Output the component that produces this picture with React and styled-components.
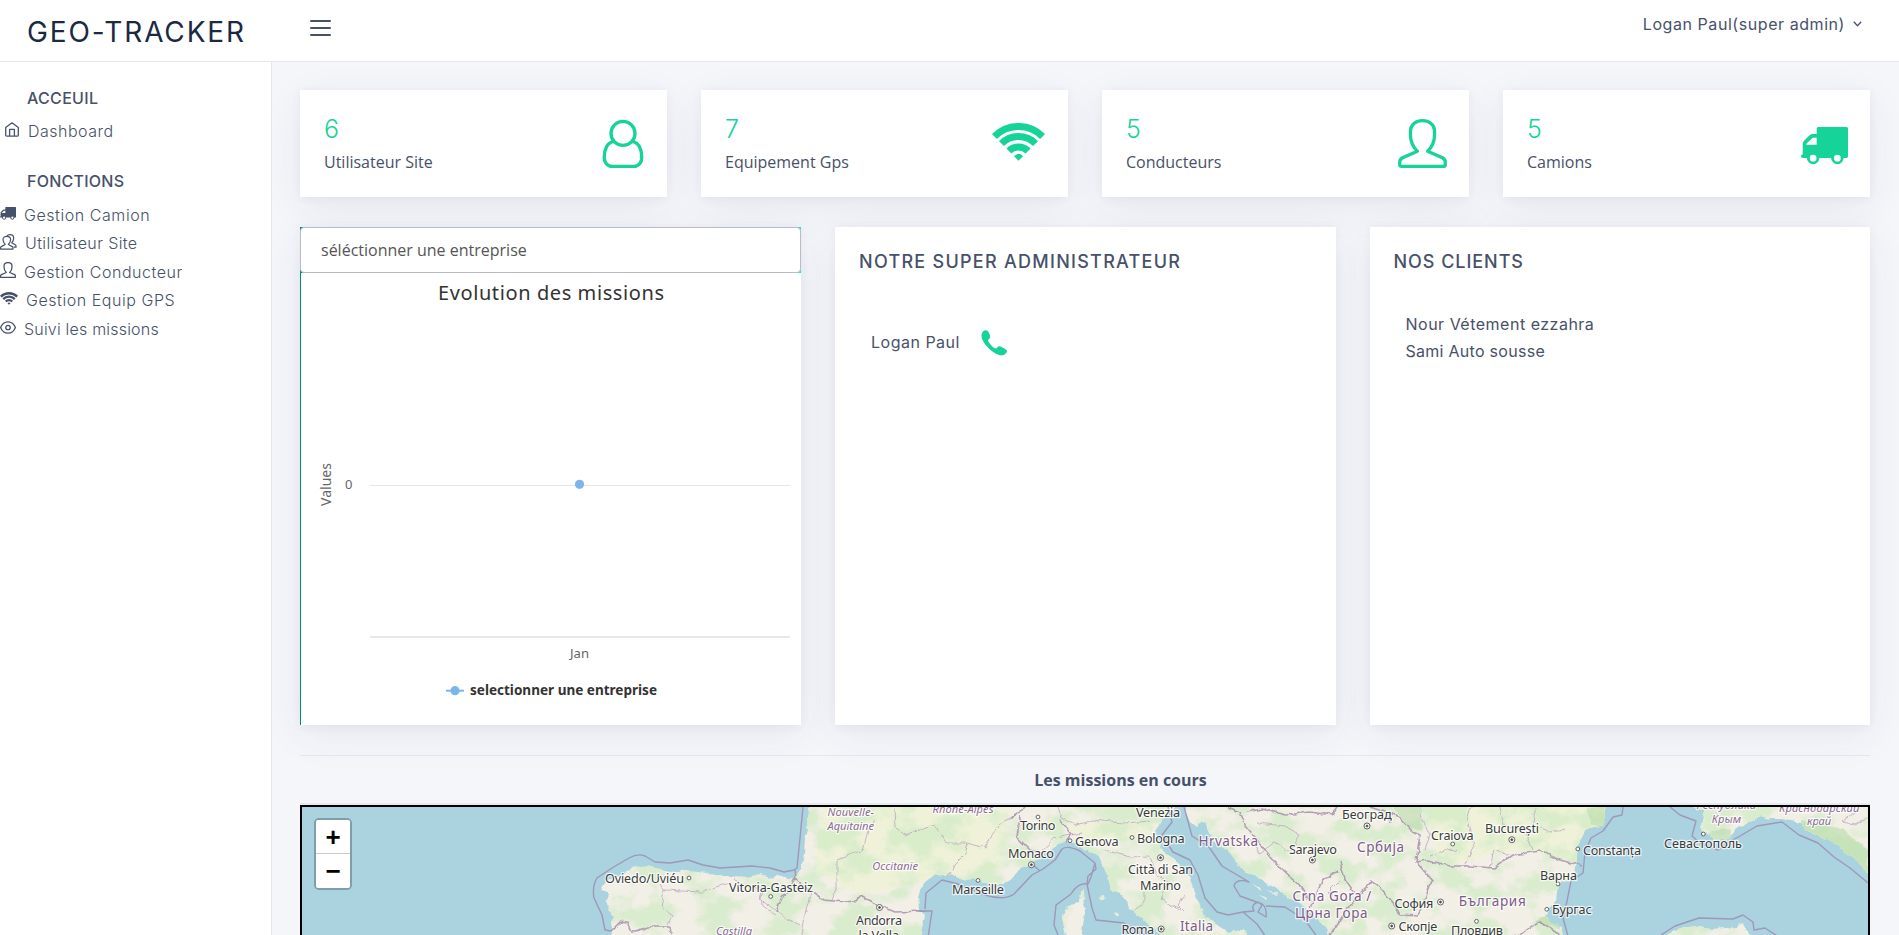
import React from "react";
import styled, { createGlobalStyle } from "styled-components";

const GlobalStyle = createGlobalStyle`
  * { box-sizing: border-box; }
  body {
    margin: 0;
    background: #f5f6fa;
    color: #475169;
    font-family: "Open Sans", "Noto Sans", sans-serif;
    font-size: 16px;
    overflow: hidden;
  }
  h1, h2, h3, p, ul { margin: 0; padding: 0; font-weight: normal; list-style: none; }
`;

const display = `"Inter", "Noto Sans", sans-serif`;
const green = "#16d39a";

const Page = styled.div`
  display: flex;
  flex-direction: column;
  height: 935px;
  overflow: hidden;
`;
const Header = styled.header`
  display: flex;
  align-items: flex-start;
  flex: none;
  height: 62px;
  padding-left: 27px;
  background: #fff;
  border-bottom: 1px solid #e4e7ed;
`;
const Brand = styled.h1`
  width: 283px;
  padding-top: 12px;
  font: 400 28px/41px ${display};
  letter-spacing: 1.85px;
  color: #1b2942;
  white-space: nowrap;
`;
const MenuButton = styled.button`
  display: flex;
  flex-direction: column;
  gap: 5px;
  width: 21px;
  margin-top: 20px;
  padding: 0;
  border: 0;
  background: none;
  span { height: 2px; border-radius: 1px; background: #475169; }
`;
const Account = styled.div`
  display: flex;
  align-items: center;
  gap: 8px;
  margin: 12px 37px 0 auto;
  font: 400 16px/24px ${display};
  letter-spacing: ${(p) => p.$track}px;
`;
const Body = styled.div`
  display: flex;
  flex: 1;
  min-height: 0;
`;
const Sidebar = styled.nav`
  flex: none;
  width: 272px;
  background: #fff;
  border-right: 1px solid #e4e7ed;
  padding-top: 24px;
`;
const NavTitle = styled.h2`
  padding-left: 27px;
  font: 500 16px/24px ${display};
  letter-spacing: ${(p) => p.$track}px;
`;
const NavList = styled.ul`
  padding: ${(p) => p.$pad};
`;
const NavItem = styled.li`
  display: flex;
  align-items: center;
  height: 28.5px;
  padding-left: ${(p) => p.$indent || 0}px;
  font: 300 16px/24px ${display};
  letter-spacing: ${(p) => p.$track}px;
  white-space: nowrap;
`;
const NavIcon = styled.span`
  display: flex;
  flex: none;
  width: ${(p) => p.$slot}px;
  padding-bottom: 3px;
`;
const Main = styled.main`
  flex: 1;
  min-width: 0;
  padding: 28px 29px 0 28px;
`;
const Row = styled.div`
  display: grid;
  grid-template-columns: repeat(${(p) => p.$cols}, 1fr);
  gap: 34px;
  margin-bottom: 30px;
`;
const Card = styled.section`
  background: #fff;
  box-shadow: 0 10px 40px rgba(62, 57, 107, 0.07), 0 2px 9px rgba(62, 57, 107, 0.06);
`;
const StatCard = styled(Card)`
  display: flex;
  justify-content: space-between;
  height: 107px;
  padding: 24px 22px 0 24px;
`;
const StatValue = styled.p`
  font: 300 25px/30px ${display};
  color: ${green};
`;
const StatLabel = styled.p`
  padding-top: 5px;
  line-height: 26px;
`;
const StatIcon = styled.div`
  display: flex;
  align-items: flex-start;
  padding: ${(p) => p.$pad};
  color: ${green};
`;
const Panel = styled(Card)`
  height: 498px;
`;
const InfoPanel = styled(Panel)`
  padding: 22px 24px;
`;
const PanelTitle = styled.h2`
  font: 500 18px/26px ${display};
  letter-spacing: ${(p) => p.$track}px;
`;
const Contact = styled.div`
  display: flex;
  align-items: center;
  gap: 21px;
  padding: 54px 0 0 12px;
  font: 400 16px/27px ${display};
  letter-spacing: ${(p) => p.$track}px;
  color: #475169;
`;
const Clients = styled.ul`
  padding: 36px 0 0 12px;
  font: 400 16px/27px ${display};
`;
const Client = styled.li`
  letter-spacing: ${(p) => p.$track}px;
`;
const SelectFrame = styled.div`
  height: 46px;
  background: linear-gradient(90deg, #008b8b, #22dfe4);
`;
const Select = styled.div`
  height: 46px;
  padding-left: 20px;
  border: 1px solid #b8bcc6;
  border-radius: 4px;
  background: #fff;
  color: #555;
  line-height: 44px;
`;
const ChartArea = styled.div`
  height: 452px;
  border-left: 1px solid #008b8b;
  svg { display: block; }
`;
const Missions = styled.h3`
  height: 50px;
  border-top: 1px solid #e1e8ee;
  border-bottom: 2px solid #e6eaef;
  padding: 12px 0 0 71px;
  text-align: center;
  font-size: 16px;
  font-weight: 700;
  line-height: 24px;
`;
const MapFrame = styled.div`
  position: relative;
  width: 1570px;
  height: 132px;
  border: 2px solid #000;
  border-bottom: 0;
  background: #aad3df;
  svg { display: block; }
`;
const ZoomControl = styled.div`
  position: absolute;
  left: 12px;
  top: 11px;
  border: 2px solid rgba(0, 0, 0, 0.25);
  border-radius: 5px;
  background-clip: padding-box;
`;
const ZoomButton = styled.button`
  display: block;
  width: 34px;
  height: 34px;
  padding: 0;
  border: 0;
  border-bottom: ${(p) => (p.$divided ? "1px solid #ccc" : "0")};
  border-radius: ${(p) => (p.$divided ? "2px 2px 0 0" : "0 0 2px 2px")};
  background: #fff;
  color: #000;
  font: 700 26px/34px "Liberation Sans", sans-serif;
`;

const UserRound = ({ w = 42, h = 50 }) => (
  <svg width={w} height={h} viewBox="0 0 42 50" fill="none" stroke="currentColor" strokeWidth="3.3">
    <circle cx="21" cy="14.4" r="12" />
    <path d="M12 22.6C5 23 2.2 31 2.2 38.5c0 5 3.3 8.8 8 8.8h21.6c4.700 0 8-3.800 8-8.800C39.800 31 37 23 30 22.600" />
  </svg>
);
const UserLine = ({ size = 49, stroke = 3.2 }) => (
  <svg width={size} height={size} viewBox="0 0 48 48" fill="none" stroke="currentColor" strokeWidth={stroke} strokeLinejoin="round">
    <path d="M19 31.500C14 27 12.200 21 12.200 15.500V11.500C12.200 5.500 17.500 1.700 24 1.700S35.800 5.500 35.800 11.500V15.500C35.800 21 34 27 29 31.500L43.500 38Q46.300 39.500 46.300 42V45Q46.300 46.300 45 46.300H3Q1.700 46.300 1.700 45V42Q1.700 39.500 4.500 38Z" />
  </svg>
);
const UsersLine = () => (
  <svg width="17" height="16" viewBox="0 0 17 16" fill="none" stroke="currentColor" strokeWidth="1.2" strokeLinejoin="round">
    <path d="M5.200 10.500C3.600 9 3 7.300 3 5.600C3 3.400 4.700 2.300 6.800 2.300s3.800 1.100 3.800 3.300c0 1.700-.6 3.400-2.200 4.900L12.300 12.600q.7.400.7 1.200v1.300H.6V13.800q0-.8.7-1.200Z" />
    <path d="M7 2C7.600 1 8.700.6 10 .6c2.100 0 3.700 1.100 3.700 3.300 0 1.700-.6 3.400-2 4.900l3.500 2q.8.500.8 1.200v1.200h-2.200" />
  </svg>
);
const Wifi = ({ w = 53, h = 38 }) => (
  <svg width={w} height={h} viewBox="0 0 53 38" fill="none" stroke="currentColor" strokeWidth="7">
    <path d="M2.400 13.500A34 34 0 0 1 50.600 13.500M9.500 20.600A24 24 0 0 1 43.500 20.600M16.900 27.900A13.600 13.600 0 0 1 36.100 27.900" />
    <path d="M26.500 37.700L22 33.200Q26.500 28.500 31 33.200Z" fill="currentColor" stroke="none" />
  </svg>
);
const Truck = ({ w = 47, h = 38 }) => (
  <svg width={w} height={h} viewBox="0 0 46.500 37.500" fill="currentColor" fillRule="evenodd">
    <path d="M17 0H45Q46.500 0 46.500 1.500V29Q46.500 30.500 45 30.500H42.200A6.200 6.200 0 0 1 29.800 30.500H18.200A6.200 6.200 0 0 1 5.800 30.500H2Q0 30.500 0 29Q0 27.500 1.700 27V17Q1.700 15 3 13.500L8 8.500Q9.500 7 11 7H15.500V1.500Q15.500 0 17 0ZM15.500 10.500H11.500L5.300 16.500V17.500H15.500ZM8.700 30.800a3.300 3.300 0 1 0 6.600 0a3.300 3.300 0 1 0-6.600 0M32.700 30.800a3.300 3.300 0 1 0 6.600 0a3.300 3.300 0 1 0-6.600 0" />
  </svg>
);
const Home = () => (
  <svg width="14" height="15" viewBox="0 0 14 15" fill="none" stroke="currentColor" strokeWidth="1.300" strokeLinejoin="round">
    <path d="M.7 5.500L7 .8L13.300 5.500V13q0 1.200-1.200 1.200H1.900Q.7 14.200.7 13Z" />
    <path d="M4.600 14V7.300H9.400V14" />
  </svg>
);
const Eye = () => (
  <svg width="16" height="13" viewBox="0 0 16 13" fill="none" stroke="currentColor" strokeWidth="1.300">
    <path d="M.6 6.500C3.500-1.100 12.500-1.100 15.400 6.500C12.500 14.100 3.500 14.100.6 6.500Z" />
    <circle cx="8" cy="6.500" r="2.200" />
  </svg>
);
const Phone = () => (
  <svg width="26" height="26" viewBox="0 0 26 26" fill={green}>
    <path d="M3.500.5C5.500-.3 7 .5 8 3C9 5.500 10 7.500 8 9C6.500 10.200 7 11 8 12.500C9.500 15 12 17.500 14 18.300C15.500 19 16 17.800 17 16.800C18.500 15.500 21 17 23.500 18.500C26 20 26.500 21 25.500 22.500C23 26.500 18 26 13 22.500C7 18.500 2 12.500.7 7.500C0 4.500 1 1.500 3.500.5Z" />
  </svg>
);
const Chevron = () => (
  <svg width="9" height="6" viewBox="0 0 9 6" fill="none" stroke="currentColor" strokeWidth="1.300">
    <path d="M.8.8L4.500 4.700L8.200.8" />
  </svg>
);

const stats = [
  { value: 6, label: "Utilisateur Site", pad: "5px 1px 0 0", icon: <UserRound /> },
  { value: 7, label: "Equipement Gps", pad: "9px 1px 0 0", icon: <Wifi /> },
  { value: 5, label: "Conducteurs", pad: "5px 0 0", icon: <UserLine /> },
  { value: 5, label: "Camions", pad: "13px 0 0", icon: <Truck /> },
];

const links = [
  { label: "Gestion Camion", track: 0.56, slot: 24, icon: <Truck w={16} h={13} /> },
  { label: "Utilisateur Site", track: 0.4, slot: 25, icon: <UsersLine /> },
  { label: "Gestion Conducteur", track: 0.55, slot: 24, icon: <UserLine size={16} stroke={3.8} /> },
  { label: "Gestion Equip GPS", track: 0.55, slot: 26, icon: <Wifi w={18} h={13} /> },
  { label: "Suivi les missions", track: 0.2, slot: 24, icon: <Eye /> },
];

function MissionChart() {
  return (
    <svg width="500" height="452" viewBox="301 273 500 452" fontFamily="Noto Sans, sans-serif" fill="#666">
      <text x="438" y="300" fontSize="20" fill="#333" textLength="226">Evolution des missions</text>
      <path d="M370 485.500H790" stroke="#e6e6e6" />
      <path d="M370 637H790" stroke="#e6e9f5" strokeWidth="2" />
      <circle cx="579.500" cy="484.300" r="4.600" fill="#7cb5ec" />
      <text transform="translate(331 506) rotate(-90)" fontSize="14.500" textLength="43" lengthAdjust="spacingAndGlyphs">Values</text>
      <text x="345" y="489" fontSize="13">0</text>
      <text x="570" y="658" fontSize="12.500" textLength="19" lengthAdjust="spacingAndGlyphs">Jan</text>
      <path d="M446 690.700H464" stroke="#7cb5ec" strokeWidth="2" />
      <circle cx="455" cy="690.700" r="4.600" fill="#7cb5ec" />
      <text x="470" y="695" fontSize="14.500" fontWeight="700" fill="#333" textLength="187" lengthAdjust="spacingAndGlyphs">selectionner une entreprise</text>
    </svg>
  );
}

const land = [
  "M810 800L809 812L807 822L808 830L805 838L804 855L800 870L794 878L785 878L778 876L772 878L760 874L747 877L734 876L722 876L710 874L698 871L686 870L670 872L655 869L648 865L641 867L634 866L629 872L618 877L605 883L601 890L607 893L608 898L605 902L610 906L608 911L614 916L611 922L612 930L611 945H918L925 915L919 910L918 897L924 883L937 873L944 877L951 874L960 880L972 878L980 882L990 884L1003 884L1013 877L1019 870L1027 865L1041 858L1048 852L1055 847L1060 843L1066 841L1075 843L1082 849L1089 850L1099 857L1106 870L1108 880L1112 890L1120 893L1126 900L1128 909L1134 912L1144 920L1152 928L1172 945H1250L1246 930L1237 930L1230 933L1220 927L1206 917L1200 906L1196 897L1193 887L1189 877L1180 866L1172 857L1164 852L1160 847L1156 833L1161 820L1170 812L1183 800Z",
  "M1185 800L1187 815L1190 822L1196 827L1201 821L1206 823L1208 831L1213 841L1221 846L1230 853L1238 864L1247 873L1257 877L1272 887L1283 893L1292 900L1303 906L1310 914L1322 923L1332 940H1563L1562 926L1552 923L1545 914L1550 907L1556 902L1557 893L1558 884L1571 880L1575 872L1577 863L1577 847L1582 838L1586 830L1590 828L1604 825L1605 800Z",
  "M1693 807L1703 812L1704 820L1700 827L1704 832L1713 837L1715 841L1727 839L1732 836L1735 830L1743 826L1753 820L1761 816L1770 819L1782 819L1800 823L1810 833L1823 839L1836 843L1845 852L1853 857L1862 868L1870 875V800H1690Z",
  "M1661 940L1668 934L1678 928L1690 928L1700 926L1712 929L1728 928L1736 927L1743 923L1748 932L1752 940Z",
  "M1080 892L1084 890L1085 913L1083 925L1081 940H1067L1064 927L1062 917L1067 907L1074 904L1079 903Z",
  "M1098 898l5-2 3 2-3 3zM1115 913l3-1 1 3-3 1zM1218 825l4 10-2 2zM1226 840l7 6-2 2zM1252 884l10 4-1 2zM1266 890l12 3-1 2zM1258 895l9 3-1 2z",
];
const seaLines =
  "M803 807L800 838L797 868L794 870L784 872L770 868L752 866L736 867L720 868L703 865L688 860L670 863L655 862L645 856Q638 853 629 858L612 868L597 878Q592 886 594 898L602 915L605 930L611 931M928 938L932 911H916M925 909L926 893L942 880L958 884L985 895Q1004 901 1014 894L1032 875L1043 869L1055 860L1062 849Q1068 845 1080 851L1095 863L1091 877L1088 884Q1078 882 1071 894L1056 905L1054 925L1060 940M1095 863L1096 869L1088 876L1087 884L1092 908L1096 920L1124 923L1140 933L1150 936M1032 864L1040 871M1168 807L1172 822L1162 835L1173 852L1190 860L1198 875L1205 898L1217 912L1228 915L1243 912L1254 911Q1250 905 1258 902L1262 905L1258 912L1266 917Q1267 907 1262 904L1240 896L1234 886Q1236 878 1249 882L1222 866L1209 847L1192 836L1184 807M1243 912L1257 924L1266 937M1266 906L1285 907L1305 920L1318 938M1623 807L1622 815L1613 817L1603 831L1591 838L1585 852L1583 873L1571 881L1567 901L1563 918L1569 940M1670 807L1680 815L1696 821L1692 836L1700 843L1718 850L1731 841L1740 836L1757 826L1782 822L1799 835L1818 843L1834 857L1850 868L1868 883M1661 935L1675 926L1699 918L1733 919L1743 915L1753 922L1754 930L1765 928L1777 936";
const borders =
  "M794 870L795 879L811 891L824 900L843 902L856 901L860 896L878 905L895 912L925 911M795 879L790 888L782 898L776 912M611 931L620 922L628 923L632 932L648 927L670 927L672 940M1060 820L1072 834L1066 842M1010 818L1020 812L1025 807M1020 816L1017 837L1030 850L1042 853M1228 807L1240 812L1246 826L1262 846L1280 868L1302 888L1310 901M1246 812L1262 809L1285 815L1310 812L1332 815L1338 807M1338 870L1322 881L1316 895L1310 908M1330 935L1350 905L1372 882L1380 887L1395 905L1400 915L1418 916L1432 880L1416 862L1420 835L1413 832L1400 818L1390 812M1416 862L1428 860L1450 866L1470 866L1494 868L1512 855L1540 851L1560 860L1582 866M1560 935L1540 922L1520 934L1500 940M1370 807L1385 812L1391 822M1340 862L1345 880L1354 893";
const provinces =
  "M661 885L664 890L661 907L672 915L667 925M664 890L700 892L730 883M734 876L740 885L765 888L760 899L778 912L790 920L800 925M760 890L762 905L775 915M811 891L806 910L802 935M874 820L868 830L863 850L836 860L836 890L832 900M895 807L896 828L905 835L920 830L935 825L945 843L968 843L965 854L954 865L948 876M968 843L985 848L993 835L1000 824L1016 815M1058 807L1062 818L1076 825L1094 820L1110 822L1125 823L1150 821M1042 850L1055 838L1082 833M1105 850L1130 857L1150 856M1150 858L1156 875L1168 882L1160 899L1180 910M1135 910L1145 902L1145 892M1185 895L1178 906L1184 912M1250 840L1260 853L1275 842L1290 852L1300 835L1285 826L1257 823M1340 880L1328 892L1342 900M1425 850L1430 835L1420 815M1430 857L1450 849L1460 852M1465 866L1474 845L1467 820L1471 807M1490 868L1494 850L1508 855M1500 807L1504 825L1525 830L1533 850M1536 807L1532 825L1550 832L1565 830M1860 807L1842 822L1855 825L1868 818";

const cities = [
  ["Oviedo/Uviéu", 605, 684, 883], ["Vitoria-Gasteiz", 729, 813, 892], ["Torino", 1020, 1055.5, 830],
  ["Venezia", 1136, 1180, 816.5], ["Genova", 1075, 1118.5, 845.5], ["Bologna", 1137, 1184.6, 842.5],
  ["Monaco", 1008, 1054, 858], ["Città di San", 1128, 1193, 874], ["Marino", 1140, 1181, 889.5],
  ["Sarajevo", 1289, 1337, 854], ["Marseille", 952, 1004, 894], ["Andorra", 856, 902, 925],
  ["la Vella", 858.5, 899, 940], ["Roma", 1121.6, 1154, 934], ["Београд", 1342, 1391.7, 819],
  ["Craiova", 1431, 1473.7, 840], ["București", 1485, 1539, 833], ["Constanța", 1583, 1641, 855],
  ["Севастополь", 1664, 1742, 848], ["Варна", 1540, 1577, 879.7], ["София", 1394.5, 1433.4, 907.7],
  ["Бургас", 1552, 1591.7, 913.7], ["Скопје", 1398.5, 1437.3, 931], ["Пловдив", 1451, 1503, 934.5],
];
const countries = [
  ["Hrvatska", 1198.4, 1258, 845.5], ["Italia", 1180, 1213, 931], ["Crna Gora /", 1292.4, 1371.4, 901],
  ["Црна Гора", 1295, 1367.5, 918], ["Србија", 1357, 1404, 852], ["България", 1458.7, 1525.7, 905.7],
];
const regions = [
  ["Castilla", 716, 752, 935], ["Nouvelle-", 827.5, 874, 816], ["Aquitaine", 827.5, 874, 830],
  ["Rhône-Alpes", 932.6, 993.5, 813], ["Occitanie", 872.3, 918, 870], ["Крым", 1711.8, 1741, 823],
  ["Республика", 1696.5, 1756, 809], ["Краснодарский", 1779, 1859.4, 812], ["край", 1807, 1831, 825],
];
const towns = [[689, 878], [770.7, 896.5], [1038, 817], [1070, 840.7], [1132, 837.5], [978, 880.4], [1452.7, 844], [1577.8, 849], [1703.3, 834], [1558, 884], [1546.8, 909.3], [1476.5, 921.3]];
const capitals = [[1031.4, 864.7], [1160.5, 857.7], [1312.4, 860], [879.5, 907.5], [1161.2, 929], [1367, 826], [1511.8, 839.7], [1440.5, 902], [1391.7, 926]];

const Labels = ({ items, ...rest }) => (
  <g stroke="#fff" strokeOpacity=".75" strokeWidth="2.500" strokeLinejoin="round" paintOrder="stroke" {...rest}>
    {items.map(([name, from, to, y]) => (
      <text key={name} x={from} y={y} textLength={to - from}>{name}</text>
    ))}
  </g>
);

function MissionMap() {
  return (
    <svg width="1566" height="128" viewBox="302 807 1566 128" fontFamily="Noto Sans, sans-serif">
      <defs>
        <clipPath id="land">{land.map((d) => <path key={d} d={d} />)}</clipPath>
        <filter id="forest" x="0" y="0" width="100%" height="100%">
          <feTurbulence type="fractalNoise" baseFrequency="0.03 0.04" numOctaves="5" seed="8" />
          <feColorMatrix values="0 0 0 0 .66  0 0 0 0 .83  0 0 0 0 .58  5 0 0 0 -2.1" />
        </filter>
        <filter id="rough" x="-2%" y="-5%" width="104%" height="110%">
          <feTurbulence type="fractalNoise" baseFrequency="0.12" numOctaves="3" seed="3" />
          <feDisplacementMap in="SourceGraphic" scale="5" xChannelSelector="R" yChannelSelector="G" />
        </filter>
      </defs>
      <g filter="url(#rough)">
        <g clipPath="url(#land)">
          <rect x="302" y="800" width="1570" height="140" fill="#f2efe6" />
          <path d="M824 800H1010L1000 870L925 880L860 895L815 870ZM1425 800H1606V870L1520 850L1440 865ZM1060 822H1150V838L1080 842Z" fill="#eff2d8" />
          <rect x="302" y="800" width="1570" height="140" filter="url(#forest)" opacity=".8" />
          <path d="M1800 820L1840 828L1868 850V880L1800 840ZM1545 915L1560 912V928L1535 922ZM1390 800H1420L1422 830L1405 825ZM1588 808L1606 806V828L1590 824ZM1708 832L1730 828L1732 842H1712Z" fill="#b5dba5" opacity=".55" />
        </g>
        <path d={provinces} fill="none" stroke="#b9a3bd" strokeWidth="1" opacity=".75" />
        <path d={borders} fill="none" stroke="#a88fae" strokeWidth="1.600" opacity=".85" />
      </g>
      <path d={seaLines} fill="none" stroke="#9c91b5" strokeWidth="1.400" strokeLinejoin="round" opacity=".9" />
      <g fill="#fff" stroke="#555" strokeWidth=".9">
        {towns.map(([x, y]) => <circle key={x} cx={x} cy={y} r="1.900" />)}
        {capitals.map(([x, y]) => (
          <g key={x}>
            <circle cx={x} cy={y} r="3" />
            <circle cx={x} cy={y} r="1" fill="#444" />
          </g>
        ))}
      </g>
      <Labels items={regions} fontSize="11.200" fontStyle="italic" fill="#8d6b96" />
      <Labels items={countries} fontSize="13.500" fill="#7d5a86" />
      <Labels items={cities} fontSize="12.700" fill="#3b3b3b" />
    </svg>
  );
}

export default function App() {
  return (
    <Page>
      <GlobalStyle />
      <Header>
        <Brand>GEO-TRACKER</Brand>
        <MenuButton aria-label="Menu"><span /><span /><span /></MenuButton>
        <Account $track={0.56}>Logan Paul(super admin)<Chevron /></Account>
      </Header>
      <Body>
        <Sidebar>
          <NavTitle $track={0.3}>ACCEUIL</NavTitle>
          <NavList $pad="7px 0 23px">
            <NavItem $indent={5} $track={0.5}><NavIcon $slot={23}><Home /></NavIcon>Dashboard</NavItem>
          </NavList>
          <NavTitle $track={0.25}>FONCTIONS</NavTitle>
          <NavList $pad="8px 0 0">
            {links.map((l) => (
              <NavItem key={l.label} $track={l.track}><NavIcon $slot={l.slot}>{l.icon}</NavIcon>{l.label}</NavItem>
            ))}
          </NavList>
        </Sidebar>
        <Main>
          <Row $cols={4}>
            {stats.map((s) => (
              <StatCard key={s.label}>
                <div>
                  <StatValue>{s.value}</StatValue>
                  <StatLabel>{s.label}</StatLabel>
                </div>
                <StatIcon $pad={s.pad}>{s.icon}</StatIcon>
              </StatCard>
            ))}
          </Row>
          <Row $cols={3}>
            <Panel>
              <SelectFrame><Select>séléctionner une entreprise</Select></SelectFrame>
              <ChartArea><MissionChart /></ChartArea>
            </Panel>
            <InfoPanel>
              <PanelTitle $track={1.27}>NOTRE SUPER ADMINISTRATEUR</PanelTitle>
              <Contact $track={0.5}>Logan Paul<Phone /></Contact>
            </InfoPanel>
            <InfoPanel>
              <PanelTitle $track={0.95}>NOS CLIENTS</PanelTitle>
              <Clients>
                <Client $track={0.5}>Nour Vétement ezzahra</Client>
                <Client $track={0.28}>Sami Auto sousse</Client>
              </Clients>
            </InfoPanel>
          </Row>
          <Missions>Les missions en cours</Missions>
          <MapFrame>
            <MissionMap />
            <ZoomControl>
              <ZoomButton $divided>+</ZoomButton>
              <ZoomButton>−</ZoomButton>
            </ZoomControl>
          </MapFrame>
        </Main>
      </Body>
    </Page>
  );
}
